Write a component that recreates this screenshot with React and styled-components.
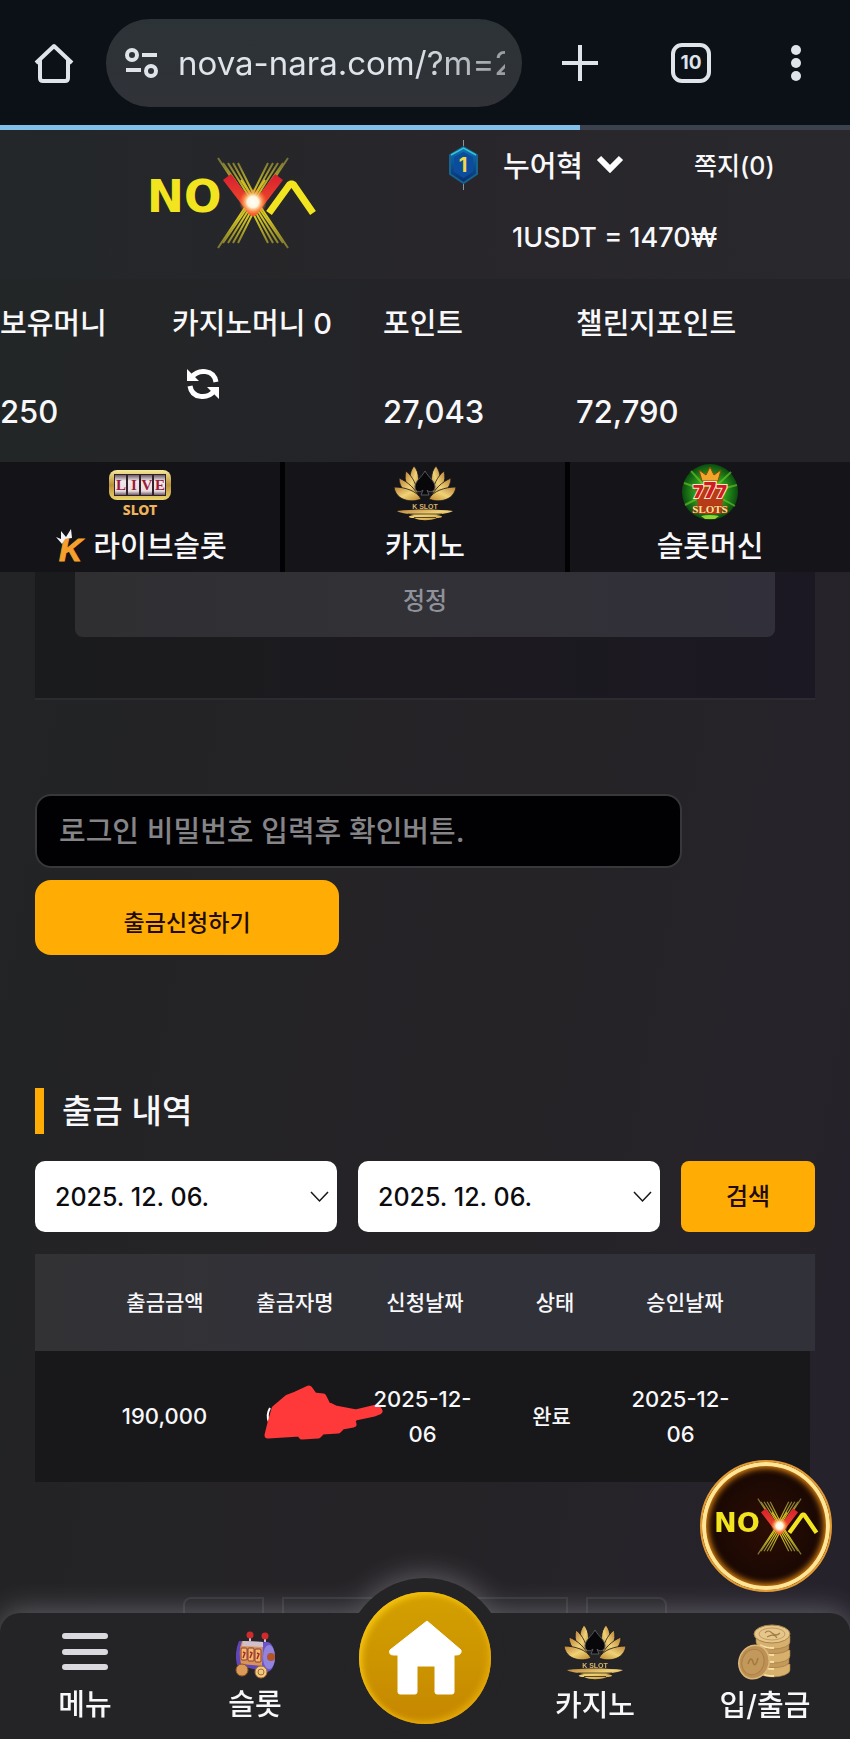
import React from "react";
import styled, { createGlobalStyle, css } from "styled-components";

const GlobalStyle = createGlobalStyle`
  *, *::before, *::after { box-sizing: border-box; }
  body {
    margin: 0;
    background: linear-gradient(100deg, #212425 0%, #242326 35%, #262327 62%, #25222c 100%);
    color: #f8f8fa;
    font-family: Inter, "Noto Sans CJK KR", sans-serif;
    font-size: 29px;
    font-weight: 500;
  }
  button, input, select { font: inherit; }
  a { color: inherit; text-decoration: none; }
`;

const Page = styled.div`
  min-height: 100vh;
`;

/* ---------- browser bar ---------- */

const BrowserBar = styled.header`
  display: flex;
  align-items: center;
  height: 125px;
  padding: 0 46px 0 34px;
  background: #0c1118;
  color: #dfe3ea;
`;

const IconButton = styled.button`
  display: flex;
  align-items: center;
  justify-content: center;
  width: ${(p) => p.$width || 40}px;
  height: 40px;
  margin-right: ${(p) => p.$gap || 0}px;
  padding: 0;
  border: 0;
  background: none;
  color: inherit;
`;

const AddressPill = styled.label`
  display: flex;
  flex: 1;
  align-items: center;
  gap: 20px;
  min-width: 0;
  height: 88px;
  margin-right: 40px;
  padding: 0 17px 0 19px;
  border-radius: 44px;
  background: linear-gradient(#2c3337, #303238);
  svg { flex: none; }
`;

const AddressInput = styled.input`
  flex: 1;
  min-width: 0;
  padding: 0;
  border: 0;
  outline: 0;
  background: none;
  color: #dfe3ea;
  font-size: 33px;
  font-weight: 400;
  mask-image: linear-gradient(90deg, #000 72%, rgba(0, 0, 0, 0.6));
`;

const TabCount = styled.span`
  display: flex;
  align-items: center;
  justify-content: center;
  width: 40px;
  height: 40px;
  border: 4px solid #dfe3ea;
  border-radius: 11px;
  font-size: 19px;
  font-weight: 700;
`;

const LoadTrack = styled.div`
  height: 5px;
  background: #3b424d;
`;

const LoadFill = styled.div`
  height: 100%;
  background: #82bfe8;
`;

/* ---------- account header ---------- */

const SiteHeader = styled.section`
  display: flex;
  height: 149px;
  background: linear-gradient(90deg, #232729, #28262a 50%, #29282d);
`;

const Brand = styled.a`
  display: flex;
  justify-content: center;
  align-items: center;
  width: 448px;
  padding: 0 0 4px 16px;
`;

const Account = styled.div`
  flex: 1;
  padding-top: 8px;
`;

const AccountRow = styled.div`
  display: flex;
  align-items: center;
  height: 54px;
`;

const MemberButton = styled.button`
  display: flex;
  align-items: center;
  gap: 13px;
  margin: 0 70px 0 24px;
  padding: 0 0 3px;
  border: 0;
  background: none;
  color: inherit;
`;

const SmallLink = styled.a`
  padding-bottom: 3px;
  font-size: 25px;
`;

const Rate = styled.p`
  margin: 29px 0 0 64px;
  font-size: 27px;
  line-height: 34px;
`;

const Balances = styled.dl`
  display: grid;
  grid-template-columns: 172fr 211fr 193fr 274fr;
  height: 183px;
  margin: 0;
  padding-top: 27px;
  background: linear-gradient(90deg, #232627, #242428 50%, #242328);
`;

const Balance = styled.div`
  white-space: nowrap;
`;

const BalanceName = styled.dt`
  line-height: 36px;
`;

const BalanceValue = styled.dd`
  margin: 52px 0 0;
  font-size: 31px;
  line-height: 36px;
`;

const BalanceRefresh = styled.dd`
  margin: 22px 0 0 11px;
`;

/* ---------- category tabs ---------- */

const Tabs = styled.nav`
  display: grid;
  grid-template-columns: repeat(3, 1fr);
  gap: 5px;
  height: 110px;
  background: #020204;
`;

const IconLink = styled.a`
  display: flex;
  flex-direction: column;
  align-items: center;
  padding-top: ${(p) => p.$top}px;
  background: ${(p) => p.$fill || "none"};
  svg { display: block; }
`;

const TabText = styled.span`
  display: flex;
  align-items: center;
  gap: 2px;
  height: 44px;
  margin-top: 4px;
  line-height: 44px;
`;

/* ---------- withdrawal form ---------- */

const Content = styled.main`
  padding: 0 35px;
`;

const ResetCard = styled.div`
  height: 128px;
  padding: 0 40px;
  border-bottom: 2px solid #2c2b31;
  background: linear-gradient(90deg, #1a1b1d, #1c1a1e 45%, #1b1823);
`;

const ResetButton = styled.button`
  width: 100%;
  height: 65px;
  padding: 0 0 13px;
  border: 0;
  border-radius: 0 0 8px 8px;
  background: linear-gradient(90deg, #2f2f32, #323136 45%, #31303a);
  color: #8f929a;
  font-size: 24px;
`;

const PasswordInput = styled.input`
  display: block;
  width: 83%;
  height: 74px;
  margin-top: 94px;
  padding: 0 22px;
  border: 2px solid #38383b;
  border-radius: 16px;
  background: #010103;
  color: #f4f4f6;
  outline: 0;
  &::placeholder { color: #858588; opacity: 1; }
`;

const gold = css`
  border: 0;
  background: #ffad05;
  color: #210b04;
`;

const SubmitButton = styled.button`
  ${gold}
  display: block;
  width: 39%;
  height: 75px;
  margin-top: 12px;
  padding: 6px 0 0;
  border-radius: 16px;
  font-size: 23px;
`;

const SectionTitle = styled.h2`
  margin: 133px 0 27px;
  padding-left: 18px;
  border-left: 9px solid #ffad05;
  font-size: 33px;
  font-weight: 500;
  line-height: 46px;
`;

const SearchRow = styled.form`
  display: flex;
  gap: 21px;
  margin-bottom: 22px;
`;

const DateField = styled.label`
  display: grid;
  flex: 1;
  align-items: center;
  min-width: 0;
  > * { grid-area: 1 / 1; }
  svg { justify-self: end; margin-right: 8px; pointer-events: none; }
`;

const DateSelect = styled.select`
  width: 100%;
  height: 71px;
  padding: 0 20px;
  border: 0;
  border-radius: 10px;
  appearance: none;
  background: #fff;
  color: #0c0c10;
  font-size: 25px;
`;

const SearchButton = styled.button`
  ${gold}
  width: 134px;
  height: 71px;
  padding: 0 0 5px;
  border-radius: 8px;
  font-size: 24px;
`;

/* ---------- history table ---------- */

const History = styled.table`
  display: block;
  thead, tbody { display: block; }
`;

const HistoryRow = styled.tr`
  display: grid;
  grid-template-columns: repeat(5, 1fr);
  align-items: center;
  height: ${(p) => (p.$head ? 97 : 131)}px;
  margin-right: ${(p) => (p.$head ? 0 : 5)}px;
  padding: 0 calc(100% / 12);
  background: ${(p) => (p.$head ? "linear-gradient(90deg, #323235, #313139 50%)" : "#18181b")};
`;

const HeadCell = styled.th`
  padding: 0 0 3px;
  font-size: 21px;
  font-weight: 500;
`;

const Cell = styled.td`
  position: relative;
  padding: 0 ${(p) => (p.$date ? 10 : 0)}px;
  font-size: ${(p) => (p.$text ? 21 : 22)}px;
  line-height: 35px;
  text-align: center;
`;

const Scribble = styled.svg`
  position: absolute;
  left: 35px;
  top: -33px;
`;

const Pager = styled.nav`
  display: flex;
  justify-content: center;
  gap: 18px;
  height: 70px;
  margin-top: 115px;
`;

const PagerButton = styled.button`
  width: ${(p) => p.$width}px;
  border: 2px solid #343437;
  border-radius: ${(p) => p.$radius || "0"};
  background: #222226;
`;

/* ---------- bars over the page ---------- */

const BottomNav = styled.nav`
  position: fixed;
  inset: auto 0 0;
  display: grid;
  grid-template-columns: repeat(5, 1fr);
  height: 126px;
  border-radius: 20px 20px 0 0;
  background: #242427;
  filter: drop-shadow(0 -3px 14px rgba(200, 200, 208, 0.36));
  &::before {
    content: "";
    position: absolute;
    left: 50%;
    top: -35px;
    width: 160px;
    height: 160px;
    margin-left: -80px;
    border-radius: 50%;
    background: #242427;
  }
`;

const HomeLink = styled.a`
  position: relative;
  justify-self: center;
  display: flex;
  align-items: center;
  justify-content: center;
  width: 132px;
  height: 132px;
  margin-top: -21px;
  border-radius: 50%;
  background: linear-gradient(#d3a000, #cc9400 55%, #c58600);
  box-shadow: inset 3px 3px 6px #f6c410, inset -3px -3px 6px #e2a708;
`;

const FloatingLogo = styled.a`
  position: fixed;
  right: 18px;
  bottom: 147px;
  display: flex;
  align-items: center;
  justify-content: center;
  width: 132px;
  height: 132px;
  border: 2px solid #e39a33;
  border-radius: 50%;
  background: radial-gradient(circle, #2c0d04 0%, #1a0803 60%, #240c03 100%);
  box-shadow: inset 0 0 0 4px #ffe596, inset 0 0 6px 6px #e58a14;
`;

/* ---------- drawings ---------- */

const rays = [0, 5, 10, 15, 20];

function NovaLogo({ width, height }) {
  return (
    <svg width={width} height={height} viewBox="0 0 170 92" role="img" aria-label="NOVA">
      <defs>
        <radialGradient id="flare">
          <stop offset="0" stopColor="#fff" />
          <stop offset=".4" stopColor="#fff6dc" />
          <stop offset=".65" stopColor="#ffb066" stopOpacity=".75" />
          <stop offset="1" stopColor="#ff7a20" stopOpacity="0" />
        </radialGradient>
        <linearGradient id="chevron" x1="0" y1="0" x2="0" y2="1">
          <stop offset="0" stopColor="#d9222f" />
          <stop offset="1" stopColor="#f4512a" />
        </linearGradient>
        <linearGradient id="rayFade" gradientUnits="userSpaceOnUse" x1="0" y1="0" x2="0" y2="92">
          <stop offset="0" stopColor="#6f6d37" />
          <stop offset=".35" stopColor="#c9bb25" />
          <stop offset=".65" stopColor="#d6c722" />
          <stop offset="1" stopColor="#77722f" />
        </linearGradient>
      </defs>
      <g stroke="url(#rayFade)" strokeWidth="2" fill="none">
        {rays.map((i) => {
          const top = i === 0 ? 1 : 6;
          const bottom = i === 20 ? 91 : 86;
          const mid = 30 + i * 0.5;
          return (
            <React.Fragment key={i}>
              <polyline points={`${71 + i},${top} ${71 + mid},46 ${121 + i},${bottom}`} />
              <polyline points={`${141 - i},${top} ${141 - mid},46 ${91 - i},${bottom}`} />
            </React.Fragment>
          );
        })}
      </g>
      <g fill="#f2e51f" fontFamily="DejaVu Sans" fontWeight="700" fontSize="44">
        <text x="0" y="55">N</text>
        <text x="37" y="55">O</text>
      </g>
      <path d="M122 56 L143 27 H146 L166 56" fill="none" stroke="#f2e51f" strokeWidth="7" strokeLinejoin="bevel" />
      <path d="M80 20 L106 54 L132 20" fill="none" stroke="url(#chevron)" strokeWidth="10" strokeLinejoin="round" />
      <path d="M94 23 L106 41 L118 23" fill="none" stroke="#d8bd22" strokeWidth="2" />
      <circle cx="106" cy="45" r="14" fill="url(#flare)" />
    </svg>
  );
}

function Lotus() {
  return (
    <svg width="62" height="56" viewBox="0 0 62 56" aria-hidden="true">
      <defs>
        <linearGradient id="lotusGold" x1="0" y1="0" x2="1" y2="1">
          <stop offset="0" stopColor="#b97f35" />
          <stop offset=".5" stopColor="#f0d277" />
          <stop offset="1" stopColor="#b98329" />
        </linearGradient>
      </defs>
      <g fill="url(#lotusGold)" stroke="#17161a" strokeWidth=".8">
        {[false, true].map((flip) => (
          <g key={String(flip)} transform={flip ? "matrix(-1 0 0 1 62 0)" : undefined}>
            <path d="M20 1 C26 8 25 18 23 27 C16 21 13 10 20 1Z" />
            <path d="M12 6 C19 12 23 20 24 31 C14 26 9 16 12 6Z" />
            <path d="M5 13 C14 17 22 24 25 33 C13 31 5 23 5 13Z" />
            <path d="M0 22 C11 22 23 26 27 34 C18 38 2 36 0 22Z" />
          </g>
        ))}
      </g>
      <path d="M31 6 C35 13 41 16 41 22 C41 27 35 28 33 25 L35 30 H27 L29 25 C26 28 21 27 21 22 C21 16 27 13 31 6Z" fill="#08080b" stroke="#57575d" />
      <text x="31" y="44" textAnchor="middle" fontFamily="Liberation Sans" fontWeight="700" fontSize="7" fill="#d6b36b">K SLOT</text>
      <path d="M3 46 C18 44 44 44 59 46 C54 49 44 49 42 50 C52 51 48 53 43 53 C36 56 26 56 20 53 C14 53 12 51 20 50 C15 48 7 49 3 46Z" fill="url(#lotusGold)" />
      <path d="M14 49 H48 M20 52.5 H42" stroke="#33270f" strokeWidth=".8" />
    </svg>
  );
}

function LiveSlot() {
  return (
    <svg width="66" height="54" viewBox="0 0 66 54" aria-hidden="true">
      <defs>
        <linearGradient id="frameGold" x1="0" y1="0" x2="0" y2="1">
          <stop offset="0" stopColor="#f6e99a" />
          <stop offset=".5" stopColor="#b99039" />
          <stop offset="1" stopColor="#ecd66d" />
        </linearGradient>
        <linearGradient id="reel" x1="0" y1="0" x2="0" y2="1">
          <stop offset="0" stopColor="#6d5c66" />
          <stop offset=".3" stopColor="#f1e8ea" />
          <stop offset=".8" stopColor="#e8dde1" />
          <stop offset="1" stopColor="#6d5c66" />
        </linearGradient>
      </defs>
      <rect x="2" y="3" width="62" height="30" rx="8" fill="url(#frameGold)" />
      <rect x="7" y="7" width="52" height="22" fill="#32202b" />
      {[8, 21, 34, 47].map((x) => <rect key={x} x={x} y="8" width="11" height="20" fill="url(#reel)" />)}
      <text x="33" y="23" fontFamily="Liberation Serif" fontWeight="700" fontSize="15" fill="#9b1c36" textAnchor="middle">
        <tspan x="14">L</tspan><tspan x="27">I</tspan><tspan x="40">V</tspan><tspan x="53">E</tspan>
      </text>
      <text x="33" y="48" textAnchor="middle" fontFamily="Noto Sans" fontWeight="800" fontSize="14" fill="#efb35c">SLOT</text>
    </svg>
  );
}

function KMark() {
  return (
    <svg width="38" height="40" viewBox="0 0 38 40" aria-hidden="true">
      <text x="6" y="34" fontFamily="Liberation Sans" fontWeight="700" fontStyle="italic" fontSize="32" fill="#f5a02c" stroke="#f5a02c" strokeWidth="1">K</text>
      <path d="M9 17 L3 10 L8 12 L8 4 L13 10 L18 2 L19 11 L12 12 Z" fill="#f4f4f6" />
    </svg>
  );
}

function Sevens() {
  return (
    <svg width="58" height="58" viewBox="0 0 58 58" aria-hidden="true">
      <defs>
        <radialGradient id="sevensGreen">
          <stop offset="0" stopColor="#b5e83a" />
          <stop offset=".55" stopColor="#2c9a1a" />
          <stop offset="1" stopColor="#0b4d10" />
        </radialGradient>
      </defs>
      <circle cx="29" cy="29" r="28" fill="url(#sevensGreen)" />
      <path d="M29 29 L3 20 M29 29 L10 8 M29 29 L50 9 M29 29 L56 22 M29 29 L4 42 M29 29 L54 43" stroke="#6fcf2c" strokeOpacity=".6" strokeWidth="2" />
      <path d="M21 18 L18 7 L25 12 L29 4 L33 12 L40 7 L37 18 Z" fill="#f2a52b" stroke="#8b4a08" />
      <path d="M14 24 H44 L40 51 H18 Z" fill="#b63b16" />
      <text x="29" y="35" fontFamily="Inter" fontWeight="900" fontSize="18" fill="#cf1b22" stroke="#ffe6c4" strokeWidth="2" paintOrder="stroke" textAnchor="middle">
        7<tspan fontSize="21">7</tspan>7
      </text>
      <text x="29" y="50" textAnchor="middle" fontFamily="Liberation Serif" fontWeight="700" fontSize="11" fill="#ffe09a" stroke="#a33611" strokeWidth="1" paintOrder="stroke">SLOTS</text>
      <path d="M20 53 Q29 51 38 53 L34 56 H24 Z" fill="#8fd42f" />
    </svg>
  );
}

function LevelBadge() {
  return (
    <svg width="31" height="50" viewBox="0 0 31 50" role="img" aria-label="레벨 1">
      <defs>
        <linearGradient id="badgeBlue" x1="0" y1="0" x2="0" y2="1">
          <stop offset="0" stopColor="#0c76b8" />
          <stop offset="1" stopColor="#0a2c6e" />
        </linearGradient>
      </defs>
      <path d="M15.5 0 V50" stroke="#8796a0" strokeWidth="1" />
      <path d="M15.5 7 L29 15 V34 L15.5 43 L2 34 V15Z" fill="url(#badgeBlue)" stroke="#15648f" strokeWidth="2" />
      <path d="M3 15 L15.5 8 L28 15" fill="none" stroke="#39c3d4" strokeWidth="1.5" />
      <path d="M15.5 12 L25 17 V32 L15.5 38 L6 32 V17Z" fill="#0b4c9c" />
      <text x="15" y="32" textAnchor="middle" fontFamily="Inter" fontWeight="700" fontSize="20" fill="#f6d84c">1</text>
    </svg>
  );
}

function SlotDrum() {
  return (
    <svg width="42" height="48" viewBox="0 0 42 48" aria-hidden="true">
      <path d="M16 6 V12 M31 7 V13" stroke="#cfc7da" strokeWidth="2" />
      <circle cx="16" cy="4" r="3.5" fill="#cf2b2d" />
      <circle cx="31" cy="5" r="3.5" fill="#cf2b2d" />
      <path d="M5 10 Q0 22 3 34 L31 41 L33 11 Z" fill="#5f45b5" />
      <ellipse cx="33" cy="26" rx="8" ry="15" fill="#6b55c9" />
      <ellipse cx="35" cy="26" rx="6" ry="12" fill="#9184df" />
      <path d="M8 10 L29 11 L28 35 L7 33 Q4 21 8 10Z" fill="#d8935b" />
      <path d="M9 10 L29 11 V16 L8 15Z" fill="#cfc0cc" />
      <g fill="#f4b76c" stroke="#8c3a35">
        <rect x="7" y="17" width="6" height="12" rx="1" />
        <rect x="14" y="17" width="6" height="13" rx="1" />
        <rect x="21" y="18" width="6" height="13" rx="1" />
      </g>
      <path d="M9 21 L11 22 L9 27 M16 21 L18 22 L16 27 M23 22 L25 23 L23 28" fill="none" stroke="#a02c2d" strokeWidth="1.5" />
      <circle cx="37" cy="26" r="4" fill="#b5532c" />
      <circle cx="8" cy="39" r="6" fill="#dc9a57" stroke="#8f5527" />
      <circle cx="27" cy="41" r="6" fill="#f0ca80" stroke="#a56b2f" />
      <circle cx="27" cy="41" r="3" fill="none" stroke="#a56b2f" />
    </svg>
  );
}

function Coins() {
  return (
    <svg width="54" height="56" viewBox="0 0 54 56" aria-hidden="true">
      {[46, 39, 32, 25, 18].map((y, i) => (
        <g key={y}>
          <path d={`M${18 + (i % 2)} ${y - 6} V${y} A17 7 0 0 0 ${52 - (i % 2)} ${y} V${y - 6}Z`} fill={i % 2 ? "#c39a5a" : "#d8b06d"} stroke="#9a7440" strokeWidth=".6" />
          <path d={`M22 ${y + 3} A17 7 0 0 0 36 ${y + 6}`} fill="none" stroke="#f7dfa8" strokeWidth="2" />
        </g>
      ))}
      <ellipse cx="34" cy="10" rx="18" ry="9" fill="#e6c68a" stroke="#a9854c" />
      <ellipse cx="34" cy="10" rx="13" ry="6" fill="none" stroke="#c39e62" />
      <path d="M27 9 Q30 5 34 9 T42 9 M29 13 Q36 9 39 14" fill="none" stroke="#a37f48" strokeWidth="1.2" />
      <ellipse cx="16" cy="38" rx="15" ry="17" transform="rotate(18 16 38)" fill="#bd9155" stroke="#dcb878" strokeWidth="1.5" />
      <ellipse cx="15" cy="38" rx="11" ry="13" transform="rotate(18 15 38)" fill="#c3985b" stroke="#ab8047" />
      <path d="M10 40 Q13 31 15 38 T20 34" fill="none" stroke="#a4793f" strokeWidth="1.5" />
    </svg>
  );
}

function MenuLines() {
  return (
    <svg width="46" height="54" viewBox="0 0 46 54" aria-hidden="true">
      <path d="M3 11 H43 M3 27 H43 M3 42 H43" stroke="#d9d9de" strokeWidth="6" strokeLinecap="round" />
    </svg>
  );
}

function RefreshIcon() {
  return (
    <svg width="34" height="34" viewBox="0 0 34 34" fill="none" stroke="#fff" strokeWidth="5" aria-hidden="true">
      <path d="M6 10 C12 2 28 2 30 15" />
      <path d="M28 24 C22 32 6 32 4 19" />
      <path d="M1 2 V14 H13 Z M33 32 V20 H21 Z" fill="#fff" stroke="none" />
    </svg>
  );
}

function DateRange({ label }) {
  return (
    <DateField>
      <DateSelect aria-label={label} defaultValue="2025-12-06">
        <option value="2025-12-06">2025. 12. 06.</option>
      </DateSelect>
      <svg width="19" height="12" viewBox="0 0 19 12" aria-hidden="true">
        <path d="M1 1 L9.5 10 L18 1" fill="none" stroke="#15151a" strokeWidth="1.5" />
      </svg>
    </DateField>
  );
}

const headings = ["출금금액", "출금자명", "신청날짜", "상태", "승인날짜"];

export default function App() {
  return (
    <Page>
      <GlobalStyle />
      <BrowserBar>
        <IconButton $gap={32} aria-label="홈">
          <svg width="40" height="40" viewBox="0 0 40 40" fill="none" stroke="currentColor" strokeWidth="4" strokeLinejoin="round">
            <path d="M2 20 L20 3 L38 20 M6 17 V35 Q6 38 9 38 H31 Q34 38 34 35 V17" />
          </svg>
        </IconButton>
        <AddressPill>
          <svg width="33" height="30" viewBox="0 0 33 30" fill="none" stroke="currentColor" strokeWidth="4" aria-hidden="true">
            <circle cx="7" cy="7" r="5" />
            <circle cx="26" cy="23" r="5" />
            <path d="M17 7 H32 M1 22 H16" />
          </svg>
          <AddressInput aria-label="주소" readOnly defaultValue="nova-nara.com/?m=2" />
        </AddressPill>
        <IconButton $width={36} $gap={73} aria-label="새 탭">
          <svg width="36" height="36" viewBox="0 0 36 36"><path d="M18 0 V36 M0 18 H36" stroke="currentColor" strokeWidth="4" /></svg>
        </IconButton>
        <IconButton $gap={77} aria-label="탭 목록"><TabCount>10</TabCount></IconButton>
        <IconButton $width={16} aria-label="더보기">
          <svg width="10" height="36" viewBox="0 0 10 36" fill="currentColor">
            <circle cx="5" cy="5" r="5" /><circle cx="5" cy="18" r="5" /><circle cx="5" cy="31" r="5" />
          </svg>
        </IconButton>
      </BrowserBar>
      <LoadTrack><LoadFill style={{ width: "68.2%" }} /></LoadTrack>

      <SiteHeader>
        <Brand href="#"><NovaLogo width={170} height={92} /></Brand>
        <Account>
          <AccountRow>
            <LevelBadge />
            <MemberButton>
              누어혁
              <svg width="28" height="18" viewBox="0 0 28 18" aria-hidden="true">
                <path d="M3 3 L14 14 L25 3" fill="none" stroke="#fff" strokeWidth="6" />
              </svg>
            </MemberButton>
            <SmallLink href="#">쪽지(0)</SmallLink>
          </AccountRow>
          <Rate>1USDT = 1470₩</Rate>
        </Account>
      </SiteHeader>

      <Balances>
        <Balance><BalanceName>보유머니</BalanceName><BalanceValue>250</BalanceValue></Balance>
        <Balance>
          <BalanceName>카지노머니 0</BalanceName>
          <BalanceRefresh><IconButton aria-label="새로고침"><RefreshIcon /></IconButton></BalanceRefresh>
        </Balance>
        <Balance><BalanceName>포인트</BalanceName><BalanceValue>27,043</BalanceValue></Balance>
        <Balance><BalanceName>챌린지포인트</BalanceName><BalanceValue>72,790</BalanceValue></Balance>
      </Balances>

      <Tabs>
        <IconLink href="#" $top={5} $fill="#141418"><LiveSlot /><TabText><KMark />라이브슬롯</TabText></IconLink>
        <IconLink href="#" $top={3} $fill="#151419"><Lotus /><TabText>카지노</TabText></IconLink>
        <IconLink href="#" $top={1} $fill="#151419"><Sevens /><TabText>슬롯머신</TabText></IconLink>
      </Tabs>

      <Content>
        <ResetCard><ResetButton>정정</ResetButton></ResetCard>
        <PasswordInput type="password" aria-label="로그인 비밀번호" placeholder="로그인 비밀번호 입력후 확인버튼." />
        <SubmitButton>출금신청하기</SubmitButton>

        <SectionTitle>출금 내역</SectionTitle>
        <SearchRow onSubmit={(e) => e.preventDefault()}>
          <DateRange label="시작일" />
          <DateRange label="종료일" />
          <SearchButton>검색</SearchButton>
        </SearchRow>

        <History>
          <thead>
            <HistoryRow $head>
              {headings.map((h) => <HeadCell key={h}>{h}</HeadCell>)}
            </HistoryRow>
          </thead>
          <tbody>
            <HistoryRow>
              <Cell>190,000</Cell>
              <Cell>
                <Scribble width="122" height="56" viewBox="0 0 122 56" aria-hidden="true">
                  <path d="M6 24 Q2 31 5 38" fill="none" stroke="#fff" strokeWidth="2" />
                  <path d="M4 51 L7 39 L11 25 L24 14 L32 11 L45 5 L50 12 L59 13 L63 21 L71 25 L92 29 L113 24 L115 27 L110 29 L91 33 L88 37 L89 40 L78 42 L74 46 L58 47 L54 51 L38 52 L36 49 Z" fill="#ff3939" stroke="#ff3939" strokeWidth="7" strokeLinejoin="round" />
                </Scribble>
              </Cell>
              <Cell $date>2025-12-06</Cell>
              <Cell $text>완료</Cell>
              <Cell $date>2025-12-06</Cell>
            </HistoryRow>
          </tbody>
        </History>

        <Pager aria-label="페이지">
          <PagerButton $width={81} $radius="8px 0 0 8px" aria-label="이전" />
          <PagerButton $width={286} aria-label="현재 페이지" />
          <PagerButton $width={81} $radius="0 8px 8px 0" aria-label="다음" />
        </Pager>
      </Content>

      <FloatingLogo href="#"><NovaLogo width={105} height={57} /></FloatingLogo>

      <BottomNav>
        <IconLink href="#" $top={12}><MenuLines /><TabText>메뉴</TabText></IconLink>
        <IconLink href="#" $top={18}><SlotDrum /><TabText>슬롯</TabText></IconLink>
        <HomeLink href="#" aria-label="홈">
          <svg width="76" height="78" viewBox="0 0 76 78" aria-hidden="true">
            <path d="M40 2 L74 31 Q75 36 69 36 H67 V73 Q67 75 65 75 H50 Q48 75 48 73 V47 H30 V73 Q30 75 28 75 H13 Q11 75 11 73 V36 H7 Q1 36 3 31 Z" fill="#fff" stroke="#fff" strokeLinejoin="round" />
          </svg>
        </HomeLink>
        <IconLink href="#" $top={11}><Lotus /><TabText>카지노</TabText></IconLink>
        <IconLink href="#" $top={11}><Coins /><TabText>입/출금</TabText></IconLink>
      </BottomNav>
    </Page>
  );
}
